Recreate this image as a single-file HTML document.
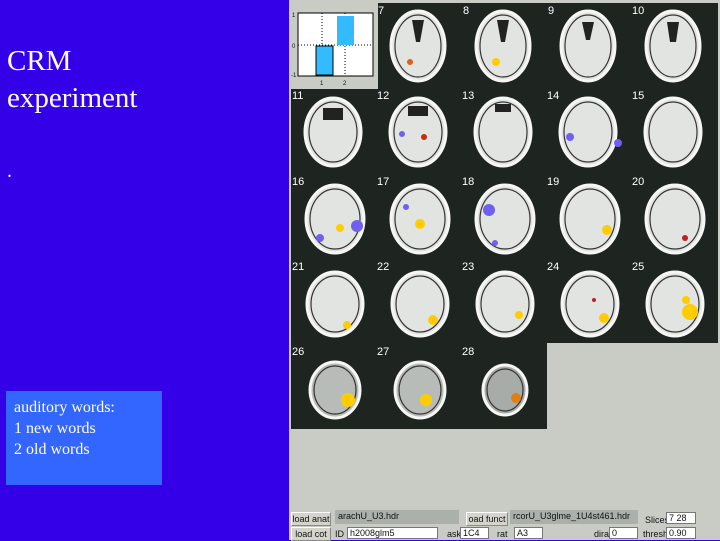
<!DOCTYPE html>
<html><head><style>
html,body{margin:0;padding:0;}
body{width:720px;height:540px;position:relative;overflow:hidden;background:#3300e8;font-family:"Liberation Serif",serif;}
.t{position:absolute;color:#fff;}
#box{position:absolute;left:6px;top:391px;width:156px;height:94px;background:#3366ff;}
#box div{color:#fff;font-size:16px;line-height:21px;}
#panel{position:absolute;left:289px;top:0;width:431px;height:540px;background:#c8ccc4;}
.lab{position:absolute;font-family:"Liberation Sans",sans-serif;font-size:9px;color:#111;}
.btn{position:absolute;background:#d4d4cc;border:1px solid #888;border-top-color:#fff;border-left-color:#fff;font-family:"Liberation Sans",sans-serif;font-size:9px;line-height:12px;text-align:center;color:#111;}
.fld{position:absolute;background:#fff;border:1px solid #777;font-family:"Liberation Sans",sans-serif;font-size:9px;line-height:11px;padding-left:2px;color:#111;box-sizing:border-box;}
.gf{position:absolute;background:#aab0aa;font-family:"Liberation Sans",sans-serif;font-size:9px;line-height:12px;padding-left:3px;color:#111;box-sizing:border-box;}
</style></head><body>
<div class="t" style="left:7px;top:43px;font-size:29px;line-height:37px;">CRM<br>experiment</div>
<div class="t" style="left:7px;top:160px;font-size:20px;">.</div>
<div id="box"><div style="padding:6px 0 0 8px;">auditory words:<br>1 new words<br>2 old words</div></div>
<div id="panel"></div>
<svg style="position:absolute;left:0;top:0" width="720" height="540">
<rect x="291" y="3" width="427" height="340" fill="#1e2420"/>
<rect x="291" y="343" width="256" height="86" fill="#1e2420"/>
<g font-family="Liberation Sans,sans-serif" font-size="11" fill="#fff">
<text x="378" y="14">7</text><text x="463" y="14">8</text><text x="548" y="14">9</text><text x="632" y="14">10</text>
<text x="292" y="99">11</text><text x="377" y="99">12</text><text x="462" y="99">13</text><text x="547" y="99">14</text><text x="632" y="99">15</text>
<text x="292" y="185">16</text><text x="377" y="185">17</text><text x="462" y="185">18</text><text x="547" y="185">19</text><text x="632" y="185">20</text>
<text x="292" y="270">21</text><text x="377" y="270">22</text><text x="462" y="270">23</text><text x="547" y="270">24</text><text x="632" y="270">25</text>
<text x="292" y="355">26</text><text x="377" y="355">27</text><text x="462" y="355">28</text>
</g>
<g fill="#e2e4e2" stroke="#f6f6f6" stroke-width="3">
<ellipse cx="418" cy="46" rx="27" ry="35"/><ellipse cx="503" cy="46" rx="27" ry="35"/><ellipse cx="588" cy="46" rx="27" ry="35"/><ellipse cx="673" cy="46" rx="27" ry="35"/>
<ellipse cx="333" cy="132" rx="28" ry="34"/><ellipse cx="418" cy="132" rx="28" ry="34"/><ellipse cx="503" cy="132" rx="28" ry="34"/><ellipse cx="588" cy="132" rx="28" ry="34"/><ellipse cx="673" cy="132" rx="28" ry="34"/>
<ellipse cx="335" cy="219" rx="29" ry="34"/><ellipse cx="420" cy="219" rx="29" ry="34"/><ellipse cx="505" cy="219" rx="29" ry="34"/><ellipse cx="590" cy="219" rx="29" ry="34"/><ellipse cx="675" cy="219" rx="29" ry="34"/>
<ellipse cx="335" cy="304" rx="28" ry="32"/><ellipse cx="420" cy="304" rx="28" ry="32"/><ellipse cx="505" cy="304" rx="28" ry="32"/><ellipse cx="590" cy="304" rx="28" ry="32"/><ellipse cx="675" cy="304" rx="28" ry="32"/>
<ellipse cx="335" cy="390" rx="25" ry="28" fill="#b8bcb8"/><ellipse cx="420" cy="390" rx="25" ry="28" fill="#b8bcb8"/><ellipse cx="505" cy="390" rx="22" ry="25" fill="#a8aca8"/>
</g>
<g fill="none" stroke="#333" stroke-width="1.2">
<ellipse cx="418" cy="46" rx="23" ry="31"/><ellipse cx="503" cy="46" rx="23" ry="31"/><ellipse cx="588" cy="46" rx="23" ry="31"/><ellipse cx="673" cy="46" rx="23" ry="31"/>
<ellipse cx="333" cy="132" rx="24" ry="30"/><ellipse cx="418" cy="132" rx="24" ry="30"/><ellipse cx="503" cy="132" rx="24" ry="30"/><ellipse cx="588" cy="132" rx="24" ry="30"/><ellipse cx="673" cy="132" rx="24" ry="30"/>
<ellipse cx="335" cy="219" rx="25" ry="30"/><ellipse cx="420" cy="219" rx="25" ry="30"/><ellipse cx="505" cy="219" rx="25" ry="30"/><ellipse cx="590" cy="219" rx="25" ry="30"/><ellipse cx="675" cy="219" rx="25" ry="30"/>
<ellipse cx="335" cy="304" rx="24" ry="28"/><ellipse cx="420" cy="304" rx="24" ry="28"/><ellipse cx="505" cy="304" rx="24" ry="28"/><ellipse cx="590" cy="304" rx="24" ry="28"/><ellipse cx="675" cy="304" rx="24" ry="28"/>
<ellipse cx="335" cy="390" rx="21" ry="24"/><ellipse cx="420" cy="390" rx="21" ry="24"/><ellipse cx="505" cy="390" rx="18" ry="21"/>
</g>
<g fill="#222">
<path d="M412 20 L424 20 L420 42 L416 42Z"/><path d="M497 20 L509 20 L505 42 L501 42Z"/><path d="M582 22 L594 22 L590 40 L586 40Z"/><path d="M667 22 L679 22 L676 42 L670 42Z"/>
<rect x="323" y="108" width="20" height="12"/><rect x="408" y="106" width="20" height="10"/><rect x="495" y="104" width="16" height="8"/>
</g>
<g fill="#ffcc00">
<circle cx="410" cy="62" r="3" fill="#e06010"/><circle cx="496" cy="62" r="4"/><circle cx="424" cy="137" r="3" fill="#c03010"/><circle cx="340" cy="228" r="4"/><circle cx="420" cy="224" r="5"/><circle cx="607" cy="230" r="5"/><circle cx="347" cy="325" r="4"/><circle cx="433" cy="320" r="5"/><circle cx="519" cy="315" r="4"/><circle cx="604" cy="318" r="5"/><circle cx="690" cy="312" r="8"/><circle cx="686" cy="300" r="4"/><circle cx="348" cy="400" r="7"/><circle cx="426" cy="400" r="6"/><circle cx="516" cy="398" r="5" fill="#e08010"/><circle cx="594" cy="300" r="2" fill="#c02020"/><circle cx="685" cy="238" r="3" fill="#c02020"/>
</g>
<g fill="#7060f0">
<circle cx="320" cy="238" r="4"/><circle cx="357" cy="226" r="6"/><circle cx="489" cy="210" r="6"/><circle cx="495" cy="243" r="3"/><circle cx="570" cy="137" r="4"/><circle cx="618" cy="143" r="4"/><circle cx="402" cy="134" r="3"/><circle cx="406" cy="207" r="3"/>
</g>
<rect x="291" y="3" width="87" height="86" fill="#c8ccc4"/>
<rect x="298" y="13" width="75" height="63" fill="#fff" stroke="#000" stroke-width="1"/>
<line x1="298" y1="45" x2="373" y2="45" stroke="#000" stroke-dasharray="1,2"/>
<line x1="322" y1="13" x2="322" y2="76" stroke="#000" stroke-dasharray="1,2"/>
<line x1="345" y1="13" x2="345" y2="76" stroke="#000" stroke-dasharray="1,2"/>
<rect x="316" y="46" width="17" height="29" fill="#33bbff" stroke="#000"/>
<rect x="337" y="16" width="17" height="29" fill="#33bbff"/>
<g font-family="Liberation Sans,sans-serif" font-size="6" fill="#111"><text x="292" y="17">1</text><text x="292" y="48">0</text><text x="291" y="77">-1</text><text x="320" y="85">1</text><text x="343" y="85">2</text></g>
</svg>
<div class="btn" style="left:291px;top:512px;width:38px;height:12px;">load anat</div>
<div class="gf" style="left:335px;top:510px;width:124px;height:14px;">arachU_U3.hdr</div>
<div class="btn" style="left:466px;top:512px;width:40px;height:12px;">oad funct</div>
<div class="gf" style="left:510px;top:510px;width:128px;height:14px;">rcorU_U3glme_1U4st461.hdr</div>
<div class="lab" style="left:645px;top:515px;">Slices</div>
<div class="fld" style="left:666px;top:512px;width:30px;height:12px;">7 28</div>
<div class="btn" style="left:291px;top:527px;width:38px;height:12px;">load cot</div>
<div class="lab" style="left:335px;top:529px;">ID</div>
<div class="fld" style="left:347px;top:527px;width:91px;height:12px;">h2008glm5</div>
<div class="lab" style="left:447px;top:529px;">ask</div>
<div class="fld" style="left:460px;top:527px;width:29px;height:12px;">1C4</div>
<div class="lab" style="left:497px;top:529px;">rat</div>
<div class="fld" style="left:514px;top:527px;width:29px;height:12px;">A3</div>
<div class="lab" style="left:594px;top:529px;">dira</div>
<div class="fld" style="left:609px;top:527px;width:29px;height:12px;">0</div>
<div class="lab" style="left:643px;top:529px;">thresh</div>
<div class="fld" style="left:666px;top:527px;width:30px;height:12px;">0.90</div>
</body></html>
